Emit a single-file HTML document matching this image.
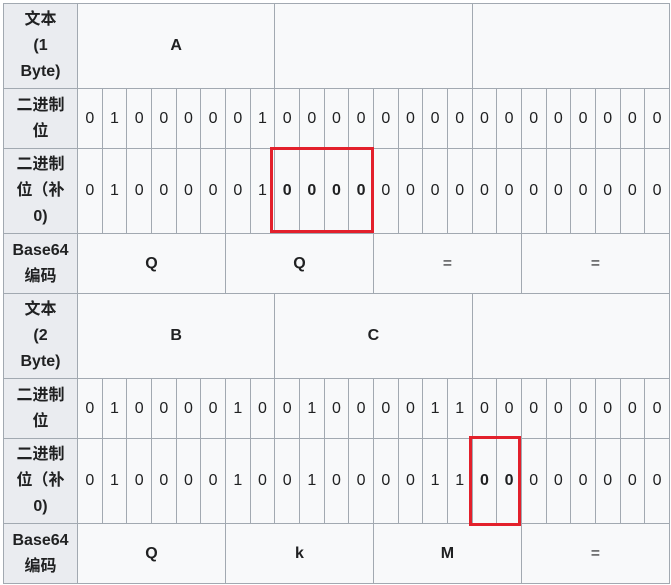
<!DOCTYPE html>
<html><head><meta charset="utf-8"><style>
html,body{margin:0;padding:0;background:#fff;width:671px;height:585px;overflow:hidden}
table{position:absolute;left:3px;top:3px;border-collapse:collapse;table-layout:fixed;width:667px;font-family:"Liberation Sans","Noto Sans CJK SC",sans-serif;font-size:16px;color:#202122}
td,th{border:1px solid #a2a9b1;background:#f8f9fa;text-align:center;padding:0;line-height:26px;overflow:hidden}
th{background:#eaecf0;font-weight:bold}
td.b{font-weight:bold}
.r{position:absolute;border:3px solid #e3202b;box-sizing:border-box}
</style></head><body>
<table>
<colgroup><col style="width:74px"><col span="24" style="width:24.67px"></colgroup>
<tr style="height:85px"><th>文本<br>(1<br>Byte)</th><td colspan="8" class="b">A</td><td colspan="8"></td><td colspan="8"></td></tr>
<tr style="height:60px"><th>二进制<br>位</th><td>0</td><td>1</td><td>0</td><td>0</td><td>0</td><td>0</td><td>0</td><td>1</td><td>0</td><td>0</td><td>0</td><td>0</td><td>0</td><td>0</td><td>0</td><td>0</td><td>0</td><td>0</td><td>0</td><td>0</td><td>0</td><td>0</td><td>0</td><td>0</td></tr>
<tr style="height:85px"><th>二进制<br>位（补<br>0)</th><td>0</td><td>1</td><td>0</td><td>0</td><td>0</td><td>0</td><td>0</td><td>1</td><td class="b">0</td><td class="b">0</td><td class="b">0</td><td class="b">0</td><td>0</td><td>0</td><td>0</td><td>0</td><td>0</td><td>0</td><td>0</td><td>0</td><td>0</td><td>0</td><td>0</td><td>0</td></tr>
<tr style="height:60px"><th>Base64<br>编码</th><td colspan="6" class="b">Q</td><td colspan="6" class="b">Q</td><td colspan="6">=</td><td colspan="6">=</td></tr>
<tr style="height:85px"><th>文本<br>(2<br>Byte)</th><td colspan="8" class="b">B</td><td colspan="8" class="b">C</td><td colspan="8"></td></tr>
<tr style="height:60px"><th>二进制<br>位</th><td>0</td><td>1</td><td>0</td><td>0</td><td>0</td><td>0</td><td>1</td><td>0</td><td>0</td><td>1</td><td>0</td><td>0</td><td>0</td><td>0</td><td>1</td><td>1</td><td>0</td><td>0</td><td>0</td><td>0</td><td>0</td><td>0</td><td>0</td><td>0</td></tr>
<tr style="height:85px"><th>二进制<br>位（补<br>0)</th><td>0</td><td>1</td><td>0</td><td>0</td><td>0</td><td>0</td><td>1</td><td>0</td><td>0</td><td>1</td><td>0</td><td>0</td><td>0</td><td>0</td><td>1</td><td>1</td><td class="b">0</td><td class="b">0</td><td>0</td><td>0</td><td>0</td><td>0</td><td>0</td><td>0</td></tr>
<tr style="height:60px"><th>Base64<br>编码</th><td colspan="6" class="b">Q</td><td colspan="6" class="b">k</td><td colspan="6" class="b">M</td><td colspan="6">=</td></tr>
</table>
<div class="r" style="left:270px;top:147px;width:104px;height:86px"></div>
<div class="r" style="left:469px;top:436px;width:52px;height:90px"></div>
</body></html>
